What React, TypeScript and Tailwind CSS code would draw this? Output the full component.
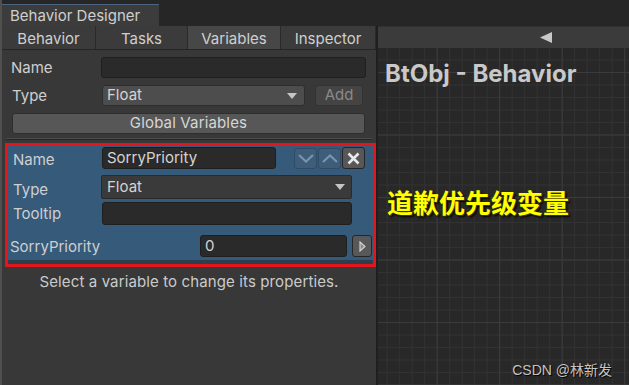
import React from 'react'

const ui = "font-['Inter','Liberation_Sans',sans-serif]"
const labelCls = 'text-[15px] leading-none text-[#cfcfcf]'

function Caret({ className }: { className?: string }) {
  return (
    <svg width="10" height="6" viewBox="0 0 10 6" className={className}>
      <polygon points="0,0 10,0 5,6" fill="#c4c4c4" />
    </svg>
  )
}

function Chevron({ up }: { up?: boolean }) {
  return (
    <svg width="16" height="9" viewBox="0 0 16 9">
      <polyline
        points={up ? '1,8 8,1.5 15,8' : '1,1 8,7.5 15,1'}
        fill="none"
        stroke="#7595b2"
        strokeWidth="2.2"
      />
    </svg>
  )
}

function TextField({ value, className }: { value?: string; className: string }) {
  return (
    <div
      className={`flex items-center rounded-[3px] border border-[#1f1f1f] bg-[#2a2a2a] pl-[4px] text-[15px] text-[#d4d4d4] ${className}`}
    >
      {value}
    </div>
  )
}

const tabs = [
  { name: 'Behavior', w: 'w-[94px]', on: false },
  { name: 'Tasks', w: 'w-[92px]', on: false },
  { name: 'Variables', w: 'w-[93px]', on: true },
  { name: 'Inspector', w: 'w-[95px]', on: false },
]

export default function App() {
  return (
    <div className={`flex h-[385px] w-[629px] flex-col overflow-hidden bg-[#262626] ${ui}`}>
      {/* window title bar */}
      <div className="flex h-[26px] items-end">
        <div className="h-full w-[2px] bg-[#505050]" />
        <div className="flex h-[22px] w-[157px] items-center border-t border-[#4b6580] bg-[#3c3c3c] pt-[1px] pl-[8px] text-[15px] text-[#cfcfcf]">
          Behavior Designer
        </div>
      </div>

      <div className="flex flex-1">
        <div className="w-[2px] bg-[#505050]" />

        {/* left panel */}
        <div className="flex w-[374px] flex-col bg-[#383838]">
          <div className="flex h-[24px] border-b border-[#252525]">
            {tabs.map((t) => (
              <div
                key={t.name}
                className={`flex items-center justify-center border-r border-[#2a2a2a] pt-[3px] text-[15px] text-[#cfcfcf] ${t.w} ${
                  t.on ? 'bg-[#474747]' : 'bg-[#3b3b3b]'
                }`}
              >
                {t.name}
              </div>
            ))}
          </div>

          <div className="mt-[7px] flex h-[21px] items-center">
            <span className={`w-[99px] pl-[9px] ${labelCls}`}>Name</span>
            <TextField className="h-[21px] w-[265px]" />
          </div>

          <div className="mt-[7px] flex h-[21px] items-center">
            <span className={`w-[100px] pl-[10px] ${labelCls}`}>Type</span>
            <div className="flex h-[21px] w-[203px] items-center justify-between rounded-[3px] border border-[#2e2e2e] bg-[#4d4d4d] pr-[7px] pl-[4px] text-[15px] text-[#d4d4d4]">
              Float
              <Caret />
            </div>
            <div className="ml-[10px] flex h-[21px] w-[48px] items-center justify-center rounded-[3px] border border-[#333] bg-[#444444] text-[15px] text-[#8a8a8a]">
              Add
            </div>
          </div>

          <div className="mt-[7px] ml-[10px] flex h-[21px] w-[353px] items-center justify-center rounded-[3px] border border-[#2e2e2e] bg-[#575757] text-[15px] tracking-[0.15px] text-[#d6d6d6]">
            Global Variables
          </div>

          <div className="mt-[4px] mx-[4px] h-[1px] bg-[#4c4c4c]" />
          <div className="mx-[4px] h-[1px] bg-[#262626]" />

          {/* selected variable */}
          <div className="mt-[3px] ml-[3px] flex flex-col border-[3px] border-[#e3161e] bg-[#365a7a]">
            <div className="mt-[1px] flex h-[22px] items-center">
              <span className={`w-[94px] pt-[2px] pl-[5px] ${labelCls}`}>Name</span>
              <TextField value="SorryPriority" className="h-[22px] w-[174px]" />
              <div className="ml-[18px] flex h-[21px] w-[23px] items-center justify-center rounded-[3px] border border-[#2f4b66] bg-[#3f5d79]">
                <Chevron />
              </div>
              <div className="ml-[1px] flex h-[21px] w-[23px] items-center justify-center rounded-[3px] border border-[#2f4b66] bg-[#3f5d79]">
                <Chevron up />
              </div>
              <div className="ml-[1px] flex h-[22px] w-[23px] items-center justify-center rounded-[3px] border border-[#262626] bg-[#575757]">
                <svg width="13" height="13" viewBox="0 0 13 13">
                  <path d="M1.5 1.5 L11.5 11.5 M11.5 1.5 L1.5 11.5" stroke="#e8e8e8" strokeWidth="2.6" />
                </svg>
              </div>
            </div>

            <div className="mt-[6px] flex h-[24px] items-center">
              <span className={`w-[93px] pt-[4px] pl-[5px] ${labelCls}`}>Type</span>
              <div className="flex h-[24px] w-[251px] items-center justify-between rounded-[2px] border border-[#2a2a2a] bg-[#3a3a3a] pr-[6px] pl-[5px] text-[15px] text-[#d4d4d4]">
                Float
                <Caret />
              </div>
            </div>

            <div className="mt-[3px] flex h-[23px] items-center">
              <span className={`w-[94px] pl-[5px] ${labelCls}`}>Tooltip</span>
              <TextField className="h-[23px] w-[250px]" />
            </div>

            <div className="mt-[10px] flex h-[22px] items-center">
              <span className={`w-[192px] pl-[2px] ${labelCls}`}>SorryPriority</span>
              <TextField value="0" className="h-[22px] w-[147px]" />
              <div className="ml-[5px] flex h-[22px] w-[20px] items-center justify-center rounded-[3px] border border-[#262626] bg-[#585858]">
                <svg width="7" height="11" viewBox="0 0 7 11">
                  <polygon points="1,1 6,5.5 1,10" fill="#8a8a8a" stroke="#d0d0d0" strokeWidth="1.2" />
                </svg>
              </div>
            </div>

            <div className="mt-[3px] h-[4px] bg-[#2f3e4c]" />
          </div>

          <p className="mt-[5px] text-center text-[15px] leading-[20px] tracking-[0.12px] text-[#cbcbcb]">
            Select a variable to change its properties.
          </p>
        </div>

        <div className="w-[2px] bg-[#1f1f1f]" />

        {/* graph panel */}
        <div className="flex flex-1 flex-col">
          <div className="flex h-[22px] items-center justify-end border-t border-[#303030] bg-[#3b3b3b] pr-[77px]">
            <svg width="12" height="11" viewBox="0 0 12 11">
              <polygon points="0,5.5 12,0 12,11" fill="#c8c8c8" />
            </svg>
          </div>
          <div className="relative flex-1 bg-[#282828] [background-image:linear-gradient(to_right,#3b3b3b_1px,transparent_1px),linear-gradient(to_bottom,#3b3b3b_1px,transparent_1px),linear-gradient(to_right,#323232_1px,transparent_1px),linear-gradient(to_bottom,#323232_1px,transparent_1px)] [background-size:62.5px_62.5px,62.5px_62.5px,12.5px_12.5px,12.5px_12.5px] [background-position:58.7px_24px,58.7px_24px,8.7px_11.5px,8.7px_11.5px]">
            <h1 className="mt-[11px] pl-[7px] text-[24px] leading-[29px] font-bold text-[#c9c9c9]">
              BtObj - Behavior
            </h1>
            <span className="absolute top-[141px] left-[9px] font-['Noto_Sans_CJK_SC',sans-serif] text-[26px] leading-[26px] font-bold text-[#ffff00] [text-shadow:1px_1px_0_#3b3000,2px_2px_2px_#000]">
              道歉优先级变量
            </span>
            <span className="absolute right-[17px] bottom-[6px] font-['Liberation_Sans','Noto_Sans_CJK_SC',sans-serif] text-[14px] leading-[17px] text-[#c4c4c4] [text-shadow:1px_1px_1px_#000]">
              CSDN @林新发
            </span>
          </div>
        </div>
      </div>
    </div>
  )
}
